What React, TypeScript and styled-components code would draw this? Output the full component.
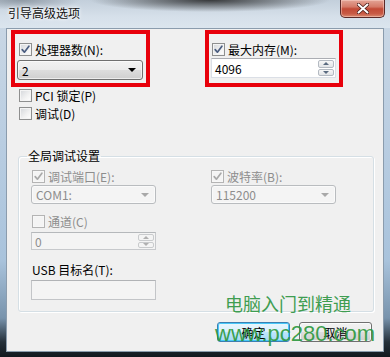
import React from "react";
import styled, { createGlobalStyle } from "styled-components";

const GlobalStyle = createGlobalStyle`
  html, body { margin: 0; padding: 0; }
  body {
    background: #1c252e;
    overflow: hidden;
    font-family: "Noto Sans CJK SC", "Liberation Sans", sans-serif;
    font-size: 12px;
    color: #000;
  }
  * { box-sizing: border-box; }
`;

const Window = styled.div`
  width: 390px;
  height: 357px;
  display: flex;
  flex-direction: column;
  background: linear-gradient(
    180deg,
    #cdd9e5 0px,
    #bccfe2 120px,
    #a9c3dc 260px,
    #7893ac 318px,
    #25303a 342px,
    #12181e 357px
  );
`;

const TitleBar = styled.div`
  height: 28px;
  flex: none;
  display: flex;
  align-items: flex-start;
  justify-content: space-between;
  background:
    radial-gradient(ellipse 120px 12px at 210px 0px, rgba(30, 30, 30, 0.85), rgba(30, 30, 30, 0)),
    radial-gradient(ellipse 60px 10px at 20px 0px, rgba(90, 100, 110, 0.5), rgba(90, 100, 110, 0)),
    linear-gradient(180deg, #c3cfdb 0%, #d6e0ea 60%, #dbe5ee 100%);
`;

const Title = styled.div`
  padding: 6px 0 0 8px;
  font-size: 12px;
  line-height: 14px;
  color: #111;
  text-shadow: 0 0 5px #fff, 0 0 3px #fff;
`;

const CloseButton = styled.div`
  width: 45px;
  height: 18px;
  margin-right: 5px;
  border: 1px solid #5b2a28;
  border-top: none;
  border-radius: 0 0 5px 5px;
  background: linear-gradient(180deg, #e3a496 0%, #d57a68 40%, #c24a36 52%, #c85a45 80%, #d98a70 100%);
  box-shadow: inset 0 0 0 1px rgba(255, 220, 210, 0.45);
  display: flex;
  align-items: center;
  justify-content: center;
`;

const Client = styled.div`
  position: relative;
  flex: 1;
  margin: 0 6px 5px 6px;
  background: #f0f0f0;
  border: 1px solid #8b9cad;
  display: flex;
  flex-direction: column;
  padding: 1px 0 0 4px;
`;

const TopRow = styled.div`
  display: flex;
  align-items: flex-start;
`;

const RedBox = styled.div<{ $width: number; $offset: number }>`
  width: ${(p) => p.$width}px;
  height: 57px;
  margin-left: ${(p) => p.$offset}px;
  border: 4px solid #e8000b;
  display: flex;
  flex-direction: column;
  padding: 9px 0 0 2px;
`;

const CheckRow = styled.label<{ $indent?: number; $disabled?: boolean; $top?: number }>`
  display: flex;
  align-items: center;
  gap: 3px;
  height: 13px;
  margin-left: ${(p) => p.$indent ?? 0}px;
  margin-top: ${(p) => p.$top ?? 0}px;
  line-height: 13px;
  font-size: 12px;
  color: ${(p) => (p.$disabled ? "#8d8d8d" : "#000")};
  white-space: nowrap;
`;

const Box = styled.span<{ $disabled?: boolean }>`
  width: 13px;
  height: 13px;
  flex: none;
  border: 1px solid ${(p) => (p.$disabled ? "#b4b4b4" : "#8e8f8f")};
  background: ${(p) =>
    p.$disabled ? "#f4f4f4" : "linear-gradient(135deg, #d3d6da 0%, #f2f2f2 60%, #ffffff 100%)"};
  box-shadow: inset 0 0 0 1px ${(p) => (p.$disabled ? "#f7f7f7" : "#f4f4f4")};
  display: flex;
  align-items: center;
  justify-content: center;
`;

const Combo = styled.div<{ $disabled?: boolean; $width: number; $height: number; $top: number }>`
  width: ${(p) => p.$width}px;
  height: ${(p) => p.$height}px;
  margin-top: ${(p) => p.$top}px;
  border: 1px solid ${(p) => (p.$disabled ? "#b9bcbf" : "#707070")};
  border-radius: 3px;
  background: ${(p) =>
    p.$disabled
      ? "#f4f4f4"
      : "linear-gradient(180deg, #f2f2f2 0%, #ebebeb 50%, #dddddd 51%, #cfcfcf 100%)"};
  box-shadow: inset 0 0 0 1px ${(p) => (p.$disabled ? "#fafafa" : "rgba(255,255,255,0.6)")};
  display: flex;
  align-items: center;
  justify-content: space-between;
  padding: 0 6px 0 4px;
  font-size: 12px;
  color: ${(p) => (p.$disabled ? "#8d8d8d" : "#000")};
`;

const Arrow = styled.span<{ $disabled?: boolean }>`
  width: 0;
  height: 0;
  border-left: 4px solid transparent;
  border-right: 4px solid transparent;
  border-top: 4px solid ${(p) => (p.$disabled ? "#a8a8a8" : "#000")};
`;

const SpinField = styled.div<{ $disabled?: boolean; $width: number; $height: number; $top: number }>`
  width: ${(p) => p.$width}px;
  height: ${(p) => p.$height}px;
  margin-top: ${(p) => p.$top}px;
  border: 1px solid ${(p) => (p.$disabled ? "#c7c9cc" : "#dbdfe6")};
  border-top-color: ${(p) => (p.$disabled ? "#b5b8bb" : "#abadb3")};
  background: ${(p) => (p.$disabled ? "#f4f4f4" : "#fff")};
  display: flex;
  align-items: stretch;
  padding-left: 3px;
  font-size: 12px;
  color: ${(p) => (p.$disabled ? "#8d8d8d" : "#000")};
`;

const FieldText = styled.span`
  flex: 1;
  display: flex;
  align-items: center;
`;

const SpinCol = styled.div`
  width: 17px;
  display: flex;
  flex-direction: column;
  padding: 1px 1px 1px 0;
  gap: 1px;
`;

const SpinBtn = styled.div<{ $disabled?: boolean }>`
  flex: 1;
  border: 1px solid ${(p) => (p.$disabled ? "#c9cbcd" : "#b4bac2")};
  border-radius: 2px;
  background: ${(p) => (p.$disabled ? "#f4f4f4" : "linear-gradient(180deg, #f7f7f7, #e2e4e7)")};
  display: flex;
  align-items: center;
  justify-content: center;
`;

const TinyArrow = styled.span<{ $up?: boolean; $disabled?: boolean }>`
  width: 0;
  height: 0;
  border-left: 3px solid transparent;
  border-right: 3px solid transparent;
  ${(p) =>
    p.$up
      ? `border-bottom: 3px solid ${p.$disabled ? "#b0b0b0" : "#5a6b80"};`
      : `border-top: 3px solid ${p.$disabled ? "#b0b0b0" : "#5a6b80"};`}
`;

const Options = styled.div`
  display: flex;
  flex-direction: column;
  gap: 5px;
  margin: 2px 0 0 8px;
`;

const Group = styled.fieldset`
  width: 356px;
  height: 163px;
  margin: 29px 0 0 7px;
  padding: 7px 0 0 12px;
  border: 1px solid #d5dfe5;
  border-radius: 3px;
  box-shadow: inset 1px 1px 0 #fff, 1px 1px 0 #fff;
  display: flex;
  gap: 55px;
  min-inline-size: 0;
`;

const Legend = styled.legend`
  padding: 0 1px;
  margin-left: -4px;
  font-size: 12px;
  line-height: 14px;
  color: #000;
`;

const Column = styled.div`
  display: flex;
  flex-direction: column;
  width: 125px;
`;

const PlainLabel = styled.div`
  margin-top: 13px;
  height: 14px;
  line-height: 14px;
  padding-left: 1px;
  font-size: 12px;
  color: #000;
  white-space: nowrap;
`;

const TextInput = styled.div`
  width: 125px;
  height: 20px;
  margin-top: 3px;
  border: 1px solid #c3c5c8;
  border-top-color: #b1b3b6;
  background: #f4f4f4;
`;

const ButtonRow = styled.div`
  display: flex;
  justify-content: flex-end;
  gap: 9px;
  margin: 10px 11px 0 0;
`;

const Button = styled.div<{ $default?: boolean }>`
  width: 73px;
  height: 20px;
  border: 1px solid ${(p) => (p.$default ? "#3c7fb1" : "#707070")};
  border-radius: 3px;
  background: ${(p) =>
    p.$default
      ? "linear-gradient(180deg, #eaf6fd 0%, #d9f0fc 50%, #bee6fd 51%, #a7d9f5 100%)"
      : "linear-gradient(180deg, #f2f2f2 0%, #ebebeb 50%, #dddddd 51%, #cfcfcf 100%)"};
  box-shadow: inset 0 0 0 1px ${(p) => (p.$default ? "#48c8f9" : "rgba(255,255,255,0.7)")};
  display: flex;
  align-items: center;
  justify-content: center;
  font-size: 12px;
  color: #000;
`;

const WatermarkCn = styled.div`
  position: absolute;
  left: 218px;
  top: 265px;
  font-family: "Noto Sans CJK SC", sans-serif;
  font-size: 18px;
  line-height: 18px;
  color: #3f9d51;
  white-space: nowrap;
  pointer-events: none;
`;

const WatermarkUrl = styled.div`
  position: absolute;
  left: 208px;
  top: 294px;
  font-family: "Liberation Sans", Arial, sans-serif;
  font-size: 22px;
  line-height: 22px;
  color: rgba(44, 152, 62, 0.92);
  white-space: nowrap;
  pointer-events: none;
`;

const Check: React.FC<{ disabled?: boolean; checked?: boolean }> = ({ disabled, checked }) => (
  <Box $disabled={disabled}>
    {checked && (
      <svg width="11" height="11" viewBox="0 0 11 11">
        <path
          d="M2.2 5.6 L4.4 8.2 L8.9 2.2"
          fill="none"
          stroke={disabled ? "#a9a9a9" : "#4a5d80"}
          strokeWidth="1.7"
          strokeLinecap="round"
          strokeLinejoin="round"
        />
      </svg>
    )}
  </Box>
);

const Spinner: React.FC<{ disabled?: boolean }> = ({ disabled }) => (
  <SpinCol>
    <SpinBtn $disabled={disabled}>
      <TinyArrow $up $disabled={disabled} />
    </SpinBtn>
    <SpinBtn $disabled={disabled}>
      <TinyArrow $disabled={disabled} />
    </SpinBtn>
  </SpinCol>
);

export default function App() {
  return (
    <>
      <GlobalStyle />
      <Window>
        <TitleBar>
          <Title>引导高级选项</Title>
          <CloseButton>
            <svg width="12" height="11" viewBox="0 0 12 11">
              <path d="M1.5 1.5 L10.5 9.5 M10.5 1.5 L1.5 9.5" stroke="#4a1c18" strokeWidth="3.6" strokeLinecap="round" />
              <path d="M1.5 1.5 L10.5 9.5 M10.5 1.5 L1.5 9.5" stroke="#ffffff" strokeWidth="2" strokeLinecap="round" />
            </svg>
          </CloseButton>
        </TitleBar>
        <Client>
          <TopRow>
            <RedBox $width={139} $offset={0}>
              <CheckRow $indent={2}>
                <Check checked />
                处理器数(N):
              </CheckRow>
              <Combo $width={126} $height={20} $top={4}>
                2
                <Arrow />
              </Combo>
            </RedBox>
            <RedBox $width={138} $offset={55}>
              <CheckRow $indent={1}>
                <Check checked />
                最大内存(M):
              </CheckRow>
              <SpinField $width={125} $height={20} $top={2}>
                <FieldText>4096</FieldText>
                <Spinner />
              </SpinField>
            </RedBox>
          </TopRow>
          <Options>
            <CheckRow>
              <Check />
              PCI 锁定(P)
            </CheckRow>
            <CheckRow>
              <Check />
              调试(D)
            </CheckRow>
          </Options>
          <Group>
            <Legend>全局调试设置</Legend>
            <Column>
              <CheckRow $indent={1} $disabled>
                <Check checked disabled />
                调试端口(E):
              </CheckRow>
              <Combo $disabled $width={125} $height={19} $top={2}>
                COM1:
                <Arrow $disabled />
              </Combo>
              <CheckRow $indent={1} $disabled $top={11}>
                <Check disabled />
                通道(C)
              </CheckRow>
              <SpinField $disabled $width={125} $height={18} $top={4}>
                <FieldText>0</FieldText>
                <Spinner disabled />
              </SpinField>
              <PlainLabel>USB 目标名(T):</PlainLabel>
              <TextInput />
            </Column>
            <Column>
              <CheckRow $disabled>
                <Check checked disabled />
                波特率(B):
              </CheckRow>
              <Combo $disabled $width={125} $height={19} $top={2}>
                115200
                <Arrow $disabled />
              </Combo>
            </Column>
          </Group>
          <ButtonRow>
            <Button $default>确定</Button>
            <Button>取消</Button>
          </ButtonRow>
          <WatermarkCn>电脑入门到精通</WatermarkCn>
          <WatermarkUrl>www.pc280.com</WatermarkUrl>
        </Client>
      </Window>
    </>
  );
}
